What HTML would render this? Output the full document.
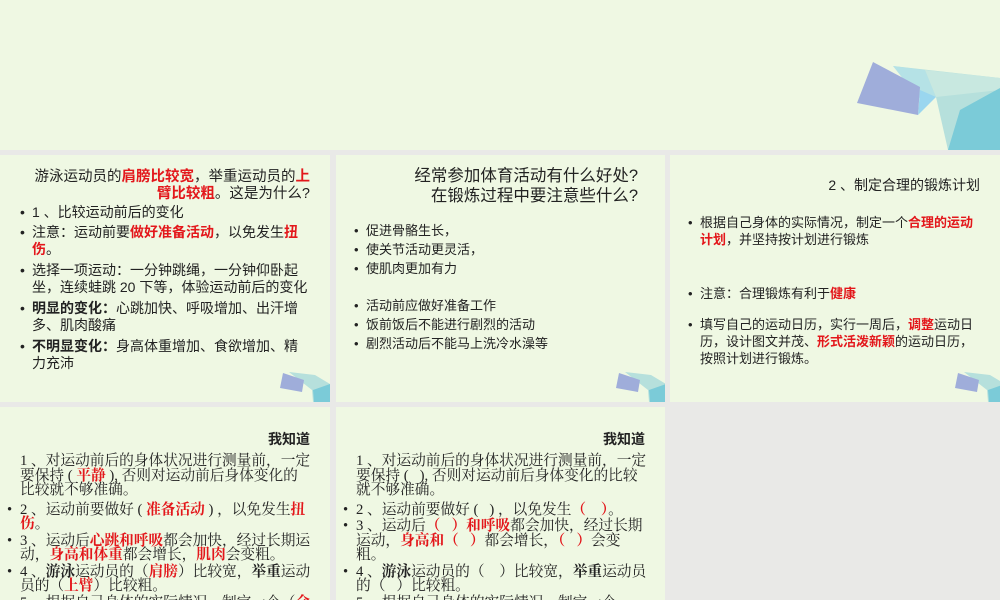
<!DOCTYPE html>
<html><head><meta charset="utf-8"><style>
body{margin:0;width:1000px;height:600px;overflow:hidden;background:#e9e9e7;position:relative;font-family:"Liberation Sans","Noto Sans CJK SC",sans-serif;color:#222}
.s{position:absolute;background:#eff8e3;overflow:hidden}
.t{position:absolute;font-size:13px;line-height:17px;white-space:nowrap}
.r{color:#e3171b;font-weight:bold}
.b{font-weight:bold}
.li{position:relative;padding-left:12px}
.li:before{content:"•";position:absolute;left:0}
.sr{font-family:"Liberation Serif","Noto Serif CJK SC",serif;font-size:14.7px;line-height:14.5px}
.sr .li{padding-left:13px}
svg{position:absolute}
</style></head><body>
<div class="s" style="left:0;top:0;width:1000px;height:150px">
<svg width="1000" height="150" style="left:0;top:0">
<polygon points="893,66 1000,78 1000,150 948,150 936,97" fill="#b6e0dc"/>
<polygon points="893,66 925,70 936,97 918,98" fill="#b5e2e6"/>
<polygon points="925,70 1000,78 1000,90 936,97" fill="#c8e8e0"/>
<polygon points="960,110 1000,88 1000,150 948,150" fill="#7bcbd8"/>
<polygon points="920,90 936,97 918,115" fill="#9ad6ef"/>
<polygon points="873,62 920,87 918,115 857,103" fill="#9fadda"/>
</svg></div>

<div class="s" style="left:0;top:155px;width:330px;height:247px">
<div class="t" style="right:20px;top:14px;font-size:14.5px;line-height:17px;text-align:right">游泳运动员的<span class="r">肩膀比较宽</span>，举重运动员的<span class="r">上</span><br><span class="r">臂比较粗</span>。这是为什么?</div>
<div class="t" style="left:20px;top:49px;font-size:14px">
<div class="li">1 、比较运动前后的变化</div>
<div class="li" style="margin-top:3px">注意：运动前要<span class="r">做好准备活动</span>，以免发生<span class="r">扭</span><br><span class="r">伤</span>。</div>
<div class="li" style="margin-top:4px">选择一项运动：一分钟跳绳，一分钟仰卧起<br>坐，连续蛙跳 20 下等，体验运动前后的变化</div>
<div class="li" style="margin-top:4px"><span class="b">明显的变化：</span>心跳加快、呼吸增加、出汗增<br>多、肌肉酸痛</div>
<div class="li" style="margin-top:4px"><span class="b">不明显变化：</span>身高体重增加、食欲增加、精<br>力充沛</div>
</div>
<svg width="60" height="40" style="left:270px;top:207px">
<polygon points="19,10 45,13 60,22 60,40 43,40 42,28" fill="#b6e0dc"/>
<polygon points="43,28 60,22 60,40 44,40" fill="#7bcbd8"/>
<polygon points="13,11 34,18 32,30 10,26" fill="#9fadda"/>
</svg></div>

<div class="s" style="left:336px;top:155px;width:329px;height:247px">
<div class="t" style="right:27px;top:11px;font-size:16.5px;line-height:20px;text-align:right">经常参加体育活动有什么好处?<br>在锻炼过程中要注意些什么?</div>
<div class="t" style="left:18px;top:67px">
<div class="li">促进骨骼生长，</div>
<div class="li" style="margin-top:2px">使关节活动更灵活，</div>
<div class="li" style="margin-top:2px">使肌肉更加有力</div>
<div class="li" style="margin-top:20px">活动前应做好准备工作</div>
<div class="li" style="margin-top:2px">饭前饭后不能进行剧烈的活动</div>
<div class="li" style="margin-top:2px">剧烈活动后不能马上洗冷水澡等</div>
</div>
<svg width="60" height="40" style="left:270px;top:207px">
<polygon points="19,10 45,13 60,22 60,40 43,40 42,28" fill="#b6e0dc"/>
<polygon points="43,28 60,22 60,40 44,40" fill="#7bcbd8"/>
<polygon points="13,11 34,18 32,30 10,26" fill="#9fadda"/>
</svg></div>

<div class="s" style="left:670px;top:155px;width:330px;height:247px">
<div class="t" style="right:20px;top:22px;font-size:14px">2 、制定合理的锻炼计划</div>
<div class="t" style="left:18px;top:59px">
<div class="li">根据自己身体的实际情况，制定一个<span class="r">合理的运动</span><br><span class="r">计划</span>，并坚持按计划进行锻炼</div>
<div class="li" style="margin-top:37px">注意：合理锻炼有利于<span class="r">健康</span></div>
<div class="li" style="margin-top:14px">填写自己的运动日历，实行一周后，<span class="r">调整</span>运动日<br>历，设计图文并茂、<span class="r">形式活泼新颖</span>的运动日历，<br>按照计划进行锻炼。</div>
</div>
<svg width="60" height="40" style="left:275px;top:207px">
<polygon points="19,10 45,13 60,22 60,40 43,40 42,28" fill="#b6e0dc"/>
<polygon points="43,28 60,22 60,40 44,40" fill="#7bcbd8"/>
<polygon points="13,11 34,18 32,30 10,26" fill="#9fadda"/>
</svg></div>

<div class="s" style="left:0;top:407px;width:330px;height:193px">
<div class="t b" style="right:20px;top:24px;font-size:14px">我知道</div>
<div class="t sr" style="left:7px;top:47px">
<div style="padding-left:13px">1 、对运动前后的身体状况进行测量前，一定<br>要保持 ( <span class="r">平静</span> ), 否则对运动前后身体变化的<br>比较就不够准确。</div>
<div class="li" style="margin-top:5px">2 、运动前要做好 ( <span class="r">准备活动</span> ) ，以免发生<span class="r">扭</span><br><span class="r">伤</span>。</div>
<div class="li" style="margin-top:2px">3 、运动后<span class="r">心跳和呼吸</span>都会加快，经过长期运<br>动，<span class="r">身高和体重</span>都会增长，<span class="r">肌肉</span>会变粗。</div>
<div class="li" style="margin-top:2px">4 、<b>游泳</b>运动员的（<span class="r">肩膀</span>）比较宽，<b>举重</b>运动<br>员的（<span class="r">上臂</span>）比较粗。</div>
<div class="li" style="margin-top:2px">5 、根据自己身体的实际情况，制定一个（<span class="r">合</span></div>
</div></div>

<div class="s" style="left:336px;top:407px;width:329px;height:193px">
<div class="t b" style="right:20px;top:24px;font-size:14px">我知道</div>
<div class="t sr" style="left:7px;top:47px">
<div style="padding-left:13px">1 、对运动前后的身体状况进行测量前，一定<br>要保持 (&nbsp;&nbsp;&nbsp;), 否则对运动前后身体变化的比较<br>就不够准确。</div>
<div class="li" style="margin-top:5px">2 、运动前要做好 (&nbsp;&nbsp;&nbsp;) ，以免发生<span class="r">（&nbsp;&nbsp;&nbsp;&nbsp;）</span>。</div>
<div class="li" style="margin-top:2px">3 、运动后<span class="r">（&nbsp;&nbsp;&nbsp;）和呼吸</span>都会加快，经过长期<br>运动，<span class="r">身高和（&nbsp;&nbsp;&nbsp;）</span>都会增长，<span class="r">（&nbsp;&nbsp;&nbsp;）</span>会变<br>粗。</div>
<div class="li" style="margin-top:2px">4 、<b>游泳</b>运动员的（&nbsp;&nbsp;&nbsp;&nbsp;）比较宽，<b>举重</b>运动员<br>的（&nbsp;&nbsp;&nbsp;）比较粗。</div>
<div class="li" style="margin-top:2px">5 、根据自己身体的实际情况，制定一个</div>
</div></div>
</body></html>
